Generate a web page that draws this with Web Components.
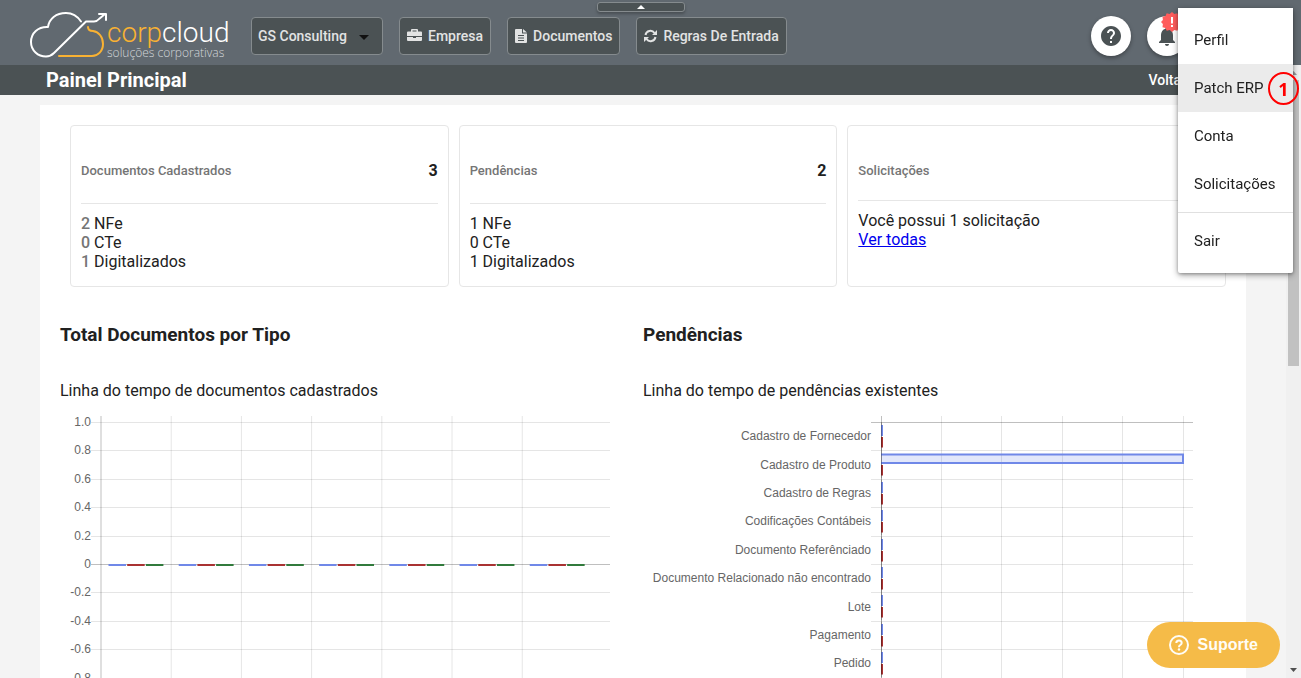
<!DOCTYPE html>
<html lang="pt-BR">
<head>
<meta charset="utf-8">
<meta name="viewport" content="width=device-width, initial-scale=1">
<title>Painel Principal</title>
<style>
  html, body { margin: 0; height: 100%; }
  body { font: 16px/19px Roboto, "Liberation Sans", sans-serif; color: #212121; background: #f4f4f4; overflow: hidden; }
</style>
</head>
<body>
<corp-app></corp-app>
<script>
const define = (name, html, setup) => {
  const template = document.createElement('template');
  template.innerHTML = html;
  customElements.define(name, class extends HTMLElement {
    constructor() {
      super();
      this.attachShadow({ mode: 'open' }).append(template.content.cloneNode(true));
    }
    connectedCallback() { if (setup) setup.call(this, this.shadowRoot); }
  });
};

define('corp-logo', `
<style>
  :host { display: block; flex: none; }
  svg { display: block; }
  .name { font: 300 28px Roboto, sans-serif; }
  .tag { font: 300 12px "Open Sans", sans-serif; }
</style>
<svg width="204" height="52" viewBox="28 10 204 52" fill="none" stroke-linecap="round" stroke-linejoin="round" role="img" aria-label="corpcloud soluções corporativas">
  <path stroke="#fff" stroke-width="2" d="M81 21.500C77 15.500 72 13 66 13C56 13 49 19 48 27C38 26.500 31 33 31 42C31 50.500 38 56.500 46 56.500C50 56.500 52 55 54 53L86 21.500H94Q97 21.500 99 19L105 14M99 14H106V20"/>
  <path stroke="#f9b233" stroke-width="2" d="M88 27C88 30 90 31 93 31C99 32 103 37 103 44C103 51 98 56 92 56H59"/>
  <text class="name" x="107" y="42" fill="#f9b233">corp<tspan fill="#fff">cloud</tspan></text>
  <text class="tag" x="107" y="57" fill="#d3d7da">soluções corporativas</text>
</svg>`);

define('company-select', `
<style>
  :host { display: flex; align-items: center; box-sizing: border-box; height: 38px; border: 1px solid #858b8e; border-radius: 4px; background: #4b5254; padding: 0 12px 0 6px; gap: 11px; }
  select { appearance: none; border: 0; background: none; padding: 0; margin: 0; color: #e2e3e3; font: 500 14px/20px Roboto, sans-serif; }
  svg { display: block; pointer-events: none; }
</style>
<select aria-label="Empresa atual"><option>GS Consulting</option></select>
<svg width="12" height="12" viewBox="0 0 12 12"><path fill="#111" d="M1 5h10L6 10z"/></svg>`);

define('nav-button', `
<style>
  :host { display: block; }
  button { display: flex; align-items: center; gap: 6px; box-sizing: border-box; height: 38px; margin: 0; padding: 0 7px; border: 1px solid #858b8e; border-radius: 4px; background: #4b5254; color: #e2e3e3; font: 500 14px/20px Roboto, sans-serif; white-space: nowrap; }
  ::slotted(svg) { display: block; fill: currentColor; }
</style>
<button type="button"><slot name="icon"></slot><slot></slot></button>`);

define('round-button', `
<style>
  :host { display: block; }
  button { display: grid; place-items: center; width: 40px; height: 40px; padding: 0; border: 0; border-radius: 50%; background: #fff; box-shadow: 0 2px 4px rgba(0,0,0,.35); }
</style>
<button type="button"><slot></slot></button>`, function (root) {
  root.querySelector('button').setAttribute('aria-label', this.getAttribute('label'));
});

define('header-handle', `
<style>
  :host { position: absolute; left: 0; right: 19px; top: 2px; display: flex; justify-content: center; }
  button { display: grid; place-items: center; width: 88px; height: 10px; box-sizing: border-box; margin: 0; padding: 0; border: 1px solid #858b8e; border-radius: 3px; background: #4b5254; box-shadow: 0 2px 3px rgba(0,0,0,.25); }
</style>
<button type="button" aria-label="Recolher cabeçalho"><svg width="8" height="4" viewBox="0 0 8 4"><path fill="#fff" d="M0 4 4 0l4 4z"/></svg></button>`);

define('app-header', `
<style>
  :host { display: block; position: relative; flex: none; background: #616970; }
  header { display: flex; align-items: center; gap: 16px; box-sizing: border-box; height: 65px; padding: 7px 114px 0 28px; }
  corp-logo { margin-right: 3px; }
  .spacer { flex: 1; }
  .alert { position: absolute; left: 6px; top: -13px; }
  .bell { position: relative; }
  svg { display: block; }
</style>
<header>
  <corp-logo></corp-logo>
  <company-select></company-select>
  <nav-button><svg slot="icon" width="15" height="16" viewBox="0 0 15 16"><path fill-rule="evenodd" d="M4 3.500V2q0-1 1-1h5q1 0 1 1v1.500h3q1 0 1 1V8H0V4.500q0-1 1-1zM5.500 3.500h4v-1h-4zM0 9h6v1h3V9h6v3q0 1-1 1H1q-1 0-1-1z"/></svg>Empresa</nav-button>
  <nav-button><svg slot="icon" width="12" height="16" viewBox="0 0 12 16"><path fill-rule="evenodd" d="M1 1h6v4.500h5V14q0 1-1 1H1q-1 0-1-1V2q0-1 1-1zM8 1l4 3.500H8zM3 7v1h6V7zM3 9.500v1h6v-1zM3 12v1h6v-1z"/></svg>Documentos</nav-button>
  <nav-button><svg slot="icon" width="13" height="14" viewBox="0 0 13 14"><g fill="none" stroke="currentColor" stroke-width="2"><path d="M1.500 6A5 5 0 0 1 10.500 4M11.500 8A5 5 0 0 1 2.500 10"/></g><path d="M13 1v5H8zM0 13V8h5z"/></svg>Regras De Entrada</nav-button>
  <span class="spacer"></span>
  <round-button label="Ajuda"><svg width="24" height="24" viewBox="0 0 24 24"><path fill="#4b5254" d="M12 2C6.480 2 2 6.480 2 12s4.480 10 10 10 10-4.480 10-10S17.520 2 12 2zm1 17h-2v-2h2v2zm2.070-7.750-.9.920C13.450 12.900 13 13.500 13 15h-2v-.5c0-1.100.450-2.100 1.170-2.830l1.240-1.260c.370-.360.590-.860.590-1.410 0-1.100-.9-2-2-2s-2 .9-2 2H8c0-2.210 1.790-4 4-4s4 1.790 4 4c0 .880-.360 1.680-.930 2.250z"/></svg></round-button>
  <round-button label="Notificações"><span class="bell"><svg width="24" height="24" viewBox="0 0 24 24"><path fill="#4b5254" d="M12 22c1.100 0 2-.9 2-2h-4c0 1.100.890 2 2 2zm6-6v-5c0-3.070-1.640-5.640-4.500-6.320V4c0-.830-.670-1.500-1.500-1.500s-1.500.670-1.500 1.500v.680C7.630 5.360 6 7.920 6 11v5l-2 2v1h16v-1l-2-2z"/></svg>
    <svg class="alert" width="22" height="22" viewBox="0 0 22 22"><path fill="#ff5c5c" d="m11 1 2.300 2 3-.8 1.200 2.800 3 .8-.4 3.200L22 11l-1.900 2 .4 3.200-3 .8-1.200 2.800-3-.8-2.300 2-2.300-2-3 .8L4.500 17l-3-.8.4-3.200L0 11l1.900-2-.4-3.200 3-.8 1.200-2.800 3 .8z"/><path fill="#fff" d="M10 6h2v6.500h-2zM10 14h2v2h-2z"/></svg></span></round-button>
</header>
<header-handle></header-handle>`);

define('title-bar', `
<style>
  :host { display: flex; align-items: center; justify-content: space-between; height: 30px; padding: 0 100px 0 46px; background: #4b5254; color: #fff; }
  h1 { margin: 0; font: 700 20px/24px Roboto, sans-serif; }
  a { color: #fff; text-decoration: none; font: 500 14px/20px Roboto, sans-serif; }
</style>
<h1><slot></slot></h1><a href="#voltar">Voltar</a>`);

define('summary-card', `
<style>
  :host { display: block; box-sizing: border-box; height: 162px; padding: 10px; border: 1px solid #e6e6e6; border-radius: 4px; background: #fff; }
  .head { display: flex; align-items: center; justify-content: space-between; padding: 25px 0 23px; border-bottom: 1px solid #e6e6e6; height: 19px; }
  :host([compact]) .head { padding-bottom: 20px; }
  h2 { margin: 0; font: 500 13px/19px Roboto, sans-serif; color: #757575; }
  .count { font-weight: 700; }
  .body { padding-top: 10px; }
</style>
<div class="head"><h2><slot name="title"></slot></h2><span class="count"><slot name="count"></slot></span></div>
<div class="body"><slot></slot></div>`);

/* Bar chart: kind="column" draws values on the left scale, kind="row" draws one band per category. */
class BarChart extends HTMLElement {
  constructor() {
    super();
    this.attachShadow({ mode: 'open' }).innerHTML = `
<style>
  :host { display: block; }
  svg { display: block; width: 100%; height: 340px; }
  text { font: 12px "Liberation Sans", Arial, sans-serif; fill: #666; text-anchor: end; }
</style><svg role="img"></svg>`;
  }
  connectedCallback() {
    this.draw();
    new ResizeObserver(() => this.draw()).observe(this);
  }
  draw() {
    const width = this.clientWidth;
    const svg = this.shadowRoot.querySelector('svg');
    svg.setAttribute('aria-label', this.getAttribute('label'));
    const line = (x1, y1, x2, y2, o) => `<path d="M${x1} ${y1}L${x2} ${y2}" stroke="#000" stroke-opacity="${o}"/>`;
    const rect = (x, y, w, h, c) => `<rect x="${x}" y="${y}" width="${w}" height="${h}" fill="${c}"/>`;
    const right = width - 33, top = 22, pitch = 28.4;
    const rowY = i => Math.round(top + pitch * i) + 0.5;
    let out = '';
    if (this.getAttribute('kind') === 'column') {
      const left = 41, step = (right - left) / 7.25;
      ['1.0', '0.8', '0.6', '0.4', '0.2', '0', '-0.2', '-0.4', '-0.6', '-0.8', '-1.0'].forEach((label, i) => {
        out += line(left - 10, rowY(i), right, rowY(i), i === 5 ? .25 : .1);
        out += `<text x="${left - 10}" y="${rowY(i) + 3.5}">${label}</text>`;
      });
      for (let i = 0; i < 7; i++) {
        const x = left + step * i;
        out += line(x, 16, x, 340, i ? .1 : .25);
        ['#7088e8', '#a93232', '#317a3c'].forEach((c, k) => { out += rect(x + 7.5 + 18.7 * k, 164, 17.5, 2, c); });
      }
    } else {
      const left = 238, step = (right - left - 10) / 5;
      for (let i = 0; i <= 5; i++) {
        const x = Math.floor(left + step * i) + .5;
        out += line(x, 16, x, 340, i ? .1 : .25);
      }
      ['Cadastro de Fornecedor', 'Cadastro de Produto', 'Cadastro de Regras', 'Codificações Contábeis', 'Documento Referênciado', 'Documento Relacionado não encontrado', 'Lote', 'Pagamento', 'Pedido'].forEach((label, i) => {
        const y = rowY(i);
        out += line(left - 10, y, right, y, i ? .1 : .25);
        out += `<text x="${left - 10}" y="${Math.round(top + pitch * (i + .5) + 4)}">${label}</text>`;
        if (i === 1) out += `<path d="M${left} ${y + 4}H${right - 10}V${y + 12.5}H${left}" fill="#7088e8" fill-opacity=".2" stroke="#7088e8" stroke-width="2"/>`;
        else out += rect(left, y + 2.5, 2, 11, '#7088e8');
        out += rect(left, y + 14.5, 2, 10.5, '#a93232');
        out += line(left + .5, y, left + .5, y + 28, .3);
      });
      out += line(left - 10, rowY(9), right, rowY(9), .1);
    }
    svg.innerHTML = out;
  }
}
customElements.define('bar-chart', BarChart);

define('chart-section', `
<style>
  :host { display: block; min-width: 0; }
  h3 { margin: 0 0 35px; font: 700 19px/22px Roboto, sans-serif; }
  p { margin: 0; }
</style>
<h3><slot name="title"></slot></h3><p><slot name="subtitle"></slot></p><slot></slot>`);

define('dashboard-page', `
<style>
  :host { display: block; }
  main { margin: 10px 40px; padding: 20px; background: #fff; }
  .cards { display: grid; grid-template-columns: repeat(3, 1fr); gap: 10px; padding-left: 10px; }
  .charts { display: grid; grid-template-columns: 1fr 1fr; margin-top: 37px; }
  .muted { color: #757575; }
  b { font-weight: 500; }
  a { color: #00e; }
</style>
<main>
  <div class="cards">
    <summary-card><span slot="title">Documentos Cadastrados</span><span slot="count">3</span>
      <div><b class="muted">2</b> NFe</div><div><b class="muted">0</b> CTe</div><div><b class="muted">1</b> Digitalizados</div></summary-card>
    <summary-card><span slot="title">Pendências</span><span slot="count">2</span>
      <div>1 NFe</div><div>0 CTe</div><div>1 Digitalizados</div></summary-card>
    <summary-card compact><span slot="title">Solicitações</span>
      <div>Você possui 1 solicitação</div><a href="#solicitacoes">Ver todas</a></summary-card>
  </div>
  <div class="charts">
    <chart-section><span slot="title">Total Documentos por Tipo</span><span slot="subtitle">Linha do tempo de documentos cadastrados</span>
      <bar-chart kind="column" label="Documentos cadastrados"></bar-chart></chart-section>
    <chart-section><span slot="title">Pendências</span><span slot="subtitle">Linha do tempo de pendências existentes</span>
      <bar-chart kind="row" label="Pendências existentes"></bar-chart></chart-section>
  </div>
</main>`);

define('scroll-rail', `
<style>
  :host { display: flex; flex-direction: column; align-items: center; flex: none; width: 15px; background: #f0f0f0; }
  svg { display: block; flex: none; }
  .track { flex: 1; align-self: stretch; padding: 0 2px; }
  .thumb { height: 49%; background: #c1c1c1; }
</style>
<svg width="15" height="15" viewBox="0 0 15 15"><path fill="#9b9b9b" d="M4 10h7L7.500 6z"/></svg>
<div class="track"><div class="thumb"></div></div>
<svg width="15" height="15" viewBox="0 0 15 15"><path fill="#505050" d="M4 5h7L7.500 9z"/></svg>`);

define('account-menu', `
<style>
  :host { display: block; position: absolute; right: 8px; top: 8px; width: 115px; z-index: 2; }
  nav { padding: 8px 0; background: #fff; border-radius: 0 0 2px 2px; box-shadow: 0 2px 6px rgba(0,0,0,.4), 0 1px 3px rgba(0,0,0,.2); }
  button { display: block; width: 100%; height: 48px; margin: 0; padding: 0 0 0 16px; border: 0; background: none; text-align: left; white-space: nowrap; color: #212121; font: 400 15px/20px Roboto, sans-serif; }
  .active { background: #ebebeb; }
  hr { margin: 4px 0; border: 0; border-top: 1px solid #e0e0e0; }
  .marker { position: absolute; right: -6px; top: 64px; display: grid; place-items: center; box-sizing: border-box; width: 31px; height: 33px; border: 2px solid #f00; border-radius: 50%; color: #f00; font: 700 18px/24px "Noto Sans", sans-serif; }
</style>
<nav>
  <button type="button">Perfil</button>
  <button type="button" class="active">Patch ERP</button>
  <button type="button">Conta</button>
  <button type="button">Solicitações</button>
  <hr>
  <button type="button">Sair</button>
</nav>
<span class="marker">1</span>`);

define('support-button', `
<style>
  :host { display: block; position: absolute; right: 21px; bottom: 10px; z-index: 1; }
  button { display: flex; align-items: center; gap: 9px; height: 46px; margin: 0; padding: 0 22px; border: 0; border-radius: 23px; background: #f5bb48; color: #fffdf6; font: 700 16px/20px "Liberation Sans", Arial, sans-serif; }
  svg { display: block; }
</style>
<button type="button"><svg width="20" height="20" viewBox="0 0 20 20" fill="none" stroke="currentColor" stroke-width="2"><circle cx="10" cy="10" r="9"/><path d="M7.300 8Q7.300 5.500 10 5.500T12.700 8Q12.700 9.200 11.300 10T10 12.200"/><circle cx="10" cy="14.500" r="1.200" fill="currentColor" stroke="none"/></svg>Suporte</button>`);

define('corp-app', `
<style>
  :host { display: flex; flex-direction: column; position: relative; height: 100vh; overflow: hidden; }
  .view { display: flex; flex: 1; min-height: 0; }
  .scroll { flex: 1; min-width: 0; overflow-y: auto; scrollbar-width: none; background: #f4f4f4; }
</style>
<app-header></app-header>
<div class="view">
  <div class="scroll">
    <title-bar>Painel Principal</title-bar>
    <dashboard-page></dashboard-page>
  </div>
  <scroll-rail></scroll-rail>
</div>
<account-menu></account-menu>
<support-button></support-button>`);
</script>
</body>
</html>
